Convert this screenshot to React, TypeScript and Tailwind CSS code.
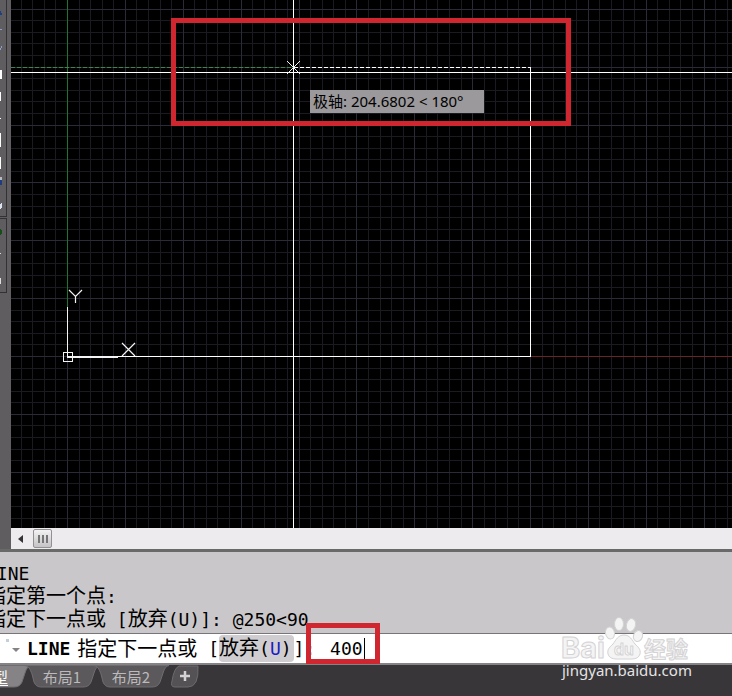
import React from "react";

const STEP = 11.575;
const gridX = Array.from({ length: 230 }, (_, i) => i - 4);
const gridY = Array.from({ length: 45 }, (_, i) => i - 30);

function Grid() {
  const x = (n: number) => Math.round(56 + n * STEP);
  const y = (n: number) => Math.round(356 + n * STEP);
  const lines = (major: boolean) => (
    <g fill={major ? "#2b2b38" : "#1b1a21"}>
      {gridX.filter((n) => (n % 5 === 0) === major).map((n) => (
        <rect key={`x${n}`} x={x(n)} y="0" width="1" height="528" />
      ))}
      {gridY.filter((n) => (n % 5 === 0) === major).map((n) => (
        <rect key={`y${n}`} x="0" y={y(n)} width="100%" height="1" />
      ))}
    </g>
  );
  return (
    <>
      {lines(false)}
      {lines(true)}
    </>
  );
}

function Drawing() {
  return (
    <svg className="block h-[528px] w-full bg-black" shapeRendering="crispEdges" aria-label="drawing">
      <Grid />
      <rect x="56" y="0" width="1" height="307" fill="#1d7532" />
      <rect x="519" y="356" width="100%" height="1" fill="#6a2426" />
      <line x1="0" y1="67.5" x2="283" y2="67.5" stroke="#153f20" />
      <line x1="0" y1="67.5" x2="283" y2="67.5" stroke="#478055" strokeDasharray="4 2" />
      <line x1="283" y1="67.5" x2="519" y2="67.5" stroke="#fff" strokeDasharray="4 2" />
      <rect x="0" y="72" width="100%" height="1" fill="#fff" />
      <rect x="282" y="0" width="1" height="528" fill="#fff" />
      <rect x="519" y="67" width="1" height="290" fill="#fff" />
      <rect x="56" y="356" width="464" height="1" fill="#fff" />
      <g fill="none" stroke="#f4f4f4">
        <path d="M276 61l13 13M289 61l-13 13" />
        <path d="M56.5 307v50" />
        <path d="M56 357h51" strokeWidth="2" />
        <path d="M52.500 352.500h9v9h-9z" />
        <g shapeRendering="auto" strokeWidth="1.2">
          <path d="M58 290l6.500 6.500L71 290M64.500 296.500v6.500" />
          <path d="M111 343l13 13M124 343l-13 13" />
        </g>
      </g>
    </svg>
  );
}

function Toolbar() {
  return (
    <aside className="w-[11px] shrink-0 bg-[#5f5d5f]">
      <svg width="11" height="296" className="block" shapeRendering="crispEdges" aria-hidden="true">
        <path d="M0 216.500h6.500V0M0 218.500h6.500v74H0" fill="none" stroke="#333133" />
        <path d="M0 14h2M0 12h1" stroke="#1d3f83" strokeWidth="2" />
        <path d="M0 29.500h2" stroke="#8b9fd0" />
        <path d="M0 50l2-4" stroke="#8b9fd0" />
        <path d="M0 70h2v9H0zM0 92h1v9H0zM0 118h1v1H0zM0 133h1v14H0zM0 157h1v12H0z" fill="#fff" />
        <path d="M0 177h2v3H0z" fill="#b9b9bf" />
        <path d="M0 180h2v5H0z" fill="#203c80" />
        <path d="M0 204l2-2v5l-2 2z" fill="#dbe4f2" />
        <path d="M0 229h1v1h1v4H1v1H0z" fill="#174d19" />
        <path d="M0 253h1v1H0zM0 278h1v6H0z" fill="#ddd" />
      </svg>
    </aside>
  );
}

function Scrollbar() {
  return (
    <div className="flex h-[21px] items-center bg-[#edebed]">
      <button aria-label="向左滚动" className="flex h-full w-[22px] items-center justify-center">
        <svg width="5" height="8" className="mr-1"><path d="M5 0v8L0 4z" fill="#333" /></svg>
      </button>
      <button aria-label="水平滚动条" className="flex h-[19px] w-[19px] items-center justify-center gap-[2px] rounded-[2px] border border-[#929092] bg-linear-to-b from-[#f3f3f3] to-[#c5c3c5]">
        <span className="h-2 w-[2px] bg-[#777577]" />
        <span className="h-2 w-[2px] bg-[#777577]" />
        <span className="h-2 w-[2px] bg-[#777577]" />
      </button>
    </div>
  );
}

function Zh({ children }: { children: React.ReactNode }) {
  return <span className="text-[20px]">{children}</span>;
}

function Tab({ label, active }: { label: string; active?: boolean }) {
  return (
    <button className={`relative -mr-[7px] h-6 w-[76px] text-[15px] leading-[22px] ${active ? "text-white" : "text-[#bcbabc]"}`}>
      <svg viewBox="0 0 76 24" className="absolute inset-0 h-full w-full" aria-hidden="true">
        <path
          d="M0 .5C5 1 6 4 8 9l2 8q2 5 7 5h42q6 0 8-5l3-9q2-7 6-7.500z"
          fill={active ? "#858385" : "#5b595b"}
          stroke="#6f6d6f"
          strokeWidth="1"
        />
      </svg>
      <span className={`relative ${active ? "underline underline-offset-2" : ""}`}>{label}</span>
    </button>
  );
}

function Watermark() {
  return (
    <div className="pointer-events-none absolute top-[615px] right-[38px] w-[134px]">
      <svg width="134" height="46" viewBox="0 0 134 46" className="block" role="img" aria-label="Baidu 经验">
        <g fill="#f5f4f5" stroke="#d4d3d4" strokeWidth="1" strokeLinejoin="round">
          <text x="1" y="43" fontFamily="Inter, sans-serif" fontWeight="700" fontSize="29">Bai</text>
          <path d="M64 20c6 0 8 5 11 9 3 3 6 5 5 10-2 6-8 5-16 5s-14 1-16-5c-1-5 2-7 5-10 3-4 5-9 11-9z" />
          <ellipse cx="50" cy="18" rx="4.500" ry="6" transform="rotate(-12 50 18)" />
          <ellipse cx="59" cy="9" rx="4.500" ry="6.500" />
          <ellipse cx="71" cy="10" rx="4.500" ry="6.500" transform="rotate(12 71 10)" />
          <ellipse cx="78" cy="21" rx="4.500" ry="5.500" transform="rotate(20 78 21)" />
          <text x="54" y="40" fontFamily="Inter, sans-serif" fontWeight="600" fontSize="16" fill="#fff">du</text>
          <text x="84" y="42" fontFamily="'Noto Sans CJK SC', sans-serif" fontWeight="700" fontSize="22">经验</text>
        </g>
      </svg>
      <p className="pl-[2px] font-['Noto_Sans',sans-serif] text-[15px] leading-[18px] text-[#e4e3e4]">jingyan.baidu.com</p>
    </div>
  );
}

export default function App() {
  return (
    <div className="relative flex min-h-screen flex-col overflow-hidden bg-[#383638] font-['Noto_Sans','Noto_Sans_CJK_SC',sans-serif]">
      <div className="flex">
        <Toolbar />
        <main className="relative min-w-0 flex-1">
          <Drawing />
          <div className="absolute top-[90px] left-[299px] h-[23px] w-[174px] bg-[#9b999b] pl-[3px] font-['Noto_Sans','Noto_Sans_CJK_SC',sans-serif] text-[15px] leading-[23px] whitespace-pre text-black">
            极轴: 204.6802 &lt; 180°
          </div>
          <div className="absolute top-[18px] left-[160px] h-[108px] w-[400px] border-5 border-[#d0262f]" />
          <Scrollbar />
        </main>
      </div>
      <section className="border-t-3 border-[#6a696a] bg-[#c9c7c9] font-['DejaVu_Sans_Mono','Noto_Sans_CJK_SC',monospace] text-[18px] text-black">
        <div className="-ml-[14px] h-[81px] pt-[10px] leading-[23px] whitespace-pre">
          <p className="h-[23px]">LINE</p>
          <p className="h-[23px]"><Zh>指定第一个点</Zh>:</p>
          <p className="h-[23px]"><Zh>指定下一点或</Zh> [<Zh>放弃</Zh>(U)]: @250&lt;90</p>
        </div>
        <div className="flex h-[30px] items-center border-t border-[#777577] bg-white whitespace-pre">
          <button aria-label="最近使用的命令" className="flex h-full w-[27px] items-center justify-center">
            <svg width="20" height="24" aria-hidden="true">
              <path d="M2 2h3v3H2z" fill="#c5cfda" />
              <path d="M8 11h8l-4 4z" fill="#848284" />
            </svg>
          </button>
          <label htmlFor="command" className="flex items-center leading-[26px]">
            <b className="mr-[7px]">LINE</b>
            <Zh>指定下一点或</Zh>
            <span> [</span>
            <span className="rounded-[4px] bg-[#cfcdcf] pr-[2px]"><Zh>放弃</Zh>(<span className="text-[#1c1cc4]">U</span>)</span>
            <span>]: </span>
          </label>
          <input id="command" defaultValue="400" className="ml-1 h-[22px] w-[35px] border-r border-black bg-transparent outline-none" />
        </div>
      </section>
      <nav className="flex h-8 flex-1 items-start border-t-2 border-[#858385] font-['Noto_Sans_CJK_SC',sans-serif]">
        <div className="-ml-[45px] flex">
          <Tab label="模型" active />
          <Tab label="布局1" />
          <Tab label="布局2" />
        </div>
        <button aria-label="新建布局" className="relative ml-2 h-6 w-[30px]">
          <svg width="30" height="24" className="block" aria-hidden="true">
            <path d="M9 1h19q1 21-10 21H5q-5 0-3-6Q4 3 9 1z" fill="#545254" stroke="#6c6a6c" />
            <path d="M15 6v10M10 11h10" stroke="#d4d2d4" strokeWidth="2.500" />
          </svg>
        </button>
      </nav>
      <div className="pointer-events-none absolute top-[623px] left-[306px] h-[41px] w-[74px] border-5 border-[#d0262f]" />
      <Watermark />
    </div>
  );
}
